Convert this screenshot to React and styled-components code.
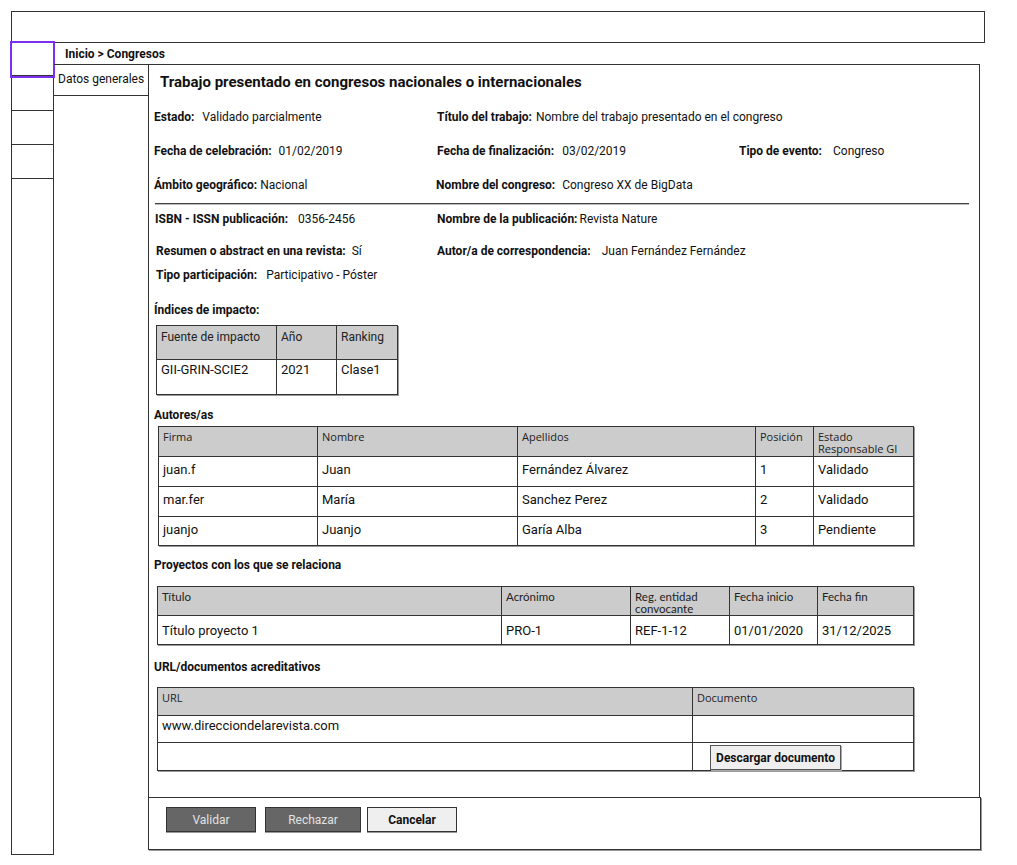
import React from 'react';
import styled, { createGlobalStyle } from 'styled-components';

const GlobalStyle = createGlobalStyle`
  * { box-sizing: border-box; }
  body {
    margin: 0;
    background: #fff;
    color: #111;
    font-family: Roboto, "Liberation Sans", Arial, sans-serif;
  }
`;

const Page = styled.div`
  width: 1017px;
  height: 865px;
  padding: 11px 0 0 11px;
`;

const TopBar = styled.div`
  width: 974px;
  height: 32px;
  border: 1px solid #333;
`;

const Body = styled.div`
  display: flex;
`;

const Rail = styled.div`
  width: 43px;
  height: 812px;
  display: flex;
  flex-direction: column;
  border: 1px solid #333;
  border-top: none;
`;

const NavBox = styled.div`
  height: ${(p) => p.$h}px;
  border-bottom: 1px solid #333;
  outline: ${(p) => (p.$active ? '2px solid #7a2ff2' : 'none')};
`;

const Workspace = styled.div`
  display: flex;
  flex-direction: column;
`;

const Breadcrumb = styled.div`
  height: 21px;
  padding: 3px 0 0 11px;
  font-size: 12px;
  font-weight: 700;
  line-height: 16px;
`;

const Split = styled.div`
  display: flex;
`;

const TabColumn = styled.div`
  width: 94px;
  border-top: 1px solid #333;
`;

const Tab = styled.div`
  height: 31px;
  padding-left: 4px;
  border-bottom: 1px solid #333;
  font-size: 12px;
  line-height: 29px;
`;

const MainColumn = styled.div`
  display: flex;
  flex-direction: column;
`;

const Panel = styled.div`
  width: 832px;
  height: 733px;
  padding-left: 5px;
  border: 1px solid #333;
  border-bottom: none;
`;

const Title = styled.h1`
  margin: 0;
  padding: 8px 0 0 6px;
  height: 35px;
  font-size: 15px;
  line-height: 18px;
  font-weight: 700;
`;

const FieldRow = styled.div`
  display: grid;
  grid-template-columns: 283px 302px 1fr;
  align-items: center;
  height: ${(p) => p.$h}px;
`;

const Field = styled.div`
  display: flex;
  align-items: center;
  margin-left: ${(p) => p.$shift || 0}px;
  font-size: 12px;
  line-height: 16px;
  white-space: nowrap;
`;

const Label = styled.span`
  font-weight: 700;
`;

const Value = styled.span`
  margin-left: ${(p) => p.$gap}px;
`;

const Divider = styled.hr`
  width: 814px;
  margin: 1px 0 0 1px;
  border: none;
  border-top: 1px solid #444;
  box-shadow: 0 1px 0 #bbb;
`;

const SectionLabel = styled.div`
  margin-top: ${(p) => p.$top}px;
  height: 16px;
  font-size: 12px;
  font-weight: 700;
  line-height: 16px;
`;

const Grid = styled.div`
  display: grid;
  grid-template-columns: ${(p) => p.$cols};
  grid-template-rows: ${(p) => p.$rows};
  margin: ${(p) => p.$top}px 0 0 ${(p) => p.$indent}px;
  width: max-content;
  border-top: 1px solid #333;
  border-left: 1px solid #333;
  box-shadow: 1px 1px 0 #999;
`;

const HeadCell = styled.div`
  padding: ${(p) => p.$pt ?? 5}px 4px 0 4px;
  background: #cccccc;
  border-right: 1px solid #333;
  border-bottom: 1px solid #333;
  font-family: ${(p) => p.$font || '"Open Sans", Roboto, sans-serif'};
  font-size: ${(p) => p.$size || 11}px;
  line-height: ${(p) => p.$lh || 12}px;
  white-space: pre-line;
  color: #222;
`;

const Cell = styled.div`
  padding: ${(p) => p.$pt}px 4px 0 4px;
  border-right: 1px solid #333;
  border-bottom: 1px solid #333;
  font-size: 13px;
  line-height: 16px;
  white-space: nowrap;
`;

const DownloadButton = styled.button`
  width: 131px;
  height: 25px;
  margin: 2px 0 0 13px;
  padding: 0;
  border: 1px solid #555;
  background: #efefef;
  box-shadow: 1px 1px 0 #aaa;
  font-family: Roboto, "Liberation Sans", sans-serif;
  font-size: 12px;
  font-weight: 700;
  color: #111;
`;

const Footer = styled.div`
  width: 833px;
  height: 53px;
  display: flex;
  align-items: flex-start;
  padding: 9px 0 0 17px;
  border: 1px solid #333;
  box-shadow: 1px 1px 0 #999;
`;

const ActionButton = styled.button`
  width: ${(p) => p.$w}px;
  height: 25px;
  margin-right: ${(p) => p.$mr || 0}px;
  padding: 0;
  border: 1px solid #333;
  background: ${(p) => (p.$primary ? '#666666' : '#efefef')};
  color: ${(p) => (p.$primary ? '#e2e2e2' : '#111')};
  font-family: Roboto, "Liberation Sans", sans-serif;
  font-size: 12px;
  font-weight: ${(p) => (p.$primary ? 400 : 700)};
  box-shadow: 0 1px 0 #999;
`;

function DataTable({ cols, rows, top, indent, heads, body, pt, headPt, headFont, headSize, headLh }) {
  return (
    <Grid $cols={cols} $rows={rows} $top={top} $indent={indent}>
      {heads.map((h) => (
        <HeadCell key={h} $pt={headPt} $font={headFont} $size={headSize} $lh={headLh}>
          {h}
        </HeadCell>
      ))}
      {body.map((row, r) =>
        row.map((c, i) => (
          <Cell key={`${r}-${i}`} $pt={pt}>
            {c}
          </Cell>
        ))
      )}
    </Grid>
  );
}

export default function App() {
  return (
    <Page>
      <GlobalStyle />
      <TopBar />
      <Body>
        <Rail>
          <NavBox $h={33} $active />
          <NavBox $h={35} />
          <NavBox $h={34} />
          <NavBox $h={34} />
        </Rail>
        <Workspace>
          <Breadcrumb>Inicio &gt; Congresos</Breadcrumb>
          <Split>
            <TabColumn>
              <Tab>Datos generales</Tab>
            </TabColumn>
            <MainColumn>
              <Panel>
                <Title>Trabajo presentado en congresos nacionales o internacionales</Title>

                <FieldRow $h={34}>
                  <Field>
                    <Label>Estado:</Label>
                    <Value $gap={8}>Validado parcialmente</Value>
                  </Field>
                  <Field>
                    <Label>Título del trabajo:</Label>
                    <Value $gap={4}>Nombre del trabajo presentado en el congreso</Value>
                  </Field>
                </FieldRow>
                <FieldRow $h={34}>
                  <Field>
                    <Label>Fecha de celebración:</Label>
                    <Value $gap={7}>01/02/2019</Value>
                  </Field>
                  <Field>
                    <Label>Fecha de finalización:</Label>
                    <Value $gap={8}>03/02/2019</Value>
                  </Field>
                  <Field>
                    <Label>Tipo de evento:</Label>
                    <Value $gap={11}>Congreso</Value>
                  </Field>
                </FieldRow>
                <FieldRow $h={34}>
                  <Field>
                    <Label>Ámbito geográfico:</Label>
                    <Value $gap={3}>Nacional</Value>
                  </Field>
                  <Field $shift={-1}>
                    <Label>Nombre del congreso:</Label>
                    <Value $gap={7}>Congreso XX de BigData</Value>
                  </Field>
                </FieldRow>

                <Divider />

                <FieldRow $h={30}>
                  <Field $shift={1}>
                    <Label>ISBN - ISSN publicación:</Label>
                    <Value $gap={10}>0356-2456</Value>
                  </Field>
                  <Field>
                    <Label>Nombre de la publicación:</Label>
                    <Value $gap={2}>Revista Nature</Value>
                  </Field>
                </FieldRow>
                <FieldRow $h={33}>
                  <Field $shift={2}>
                    <Label>Resumen o abstract en una revista:</Label>
                    <Value $gap={6}>Sí</Value>
                  </Field>
                  <Field>
                    <Label>Autor/a de correspondencia:</Label>
                    <Value $gap={11}>Juan Fernández Fernández</Value>
                  </Field>
                </FieldRow>
                <FieldRow $h={16}>
                  <Field $shift={2}>
                    <Label>Tipo participación:</Label>
                    <Value $gap={9}>Participativo - Póster</Value>
                  </Field>
                </FieldRow>

                <SectionLabel $top={19}>Índices de impacto:</SectionLabel>
                <DataTable
                  cols="120px 60px 61px"
                  rows="34px 35px"
                  top={7}
                  indent={2}
                  pt={2}
                  headFont='Roboto, "Liberation Sans", sans-serif'
                  headSize={12}
                  heads={['Fuente de impacto', 'Año', 'Ranking']}
                  body={[['GII-GRIN-SCIE2', '2021', 'Clase1']]}
                />

                <SectionLabel $top={12}>Autores/as</SectionLabel>
                <DataTable
                  cols="159px 200px 238px 58px 100px"
                  rows="30px 30px 30px 29px"
                  top={3}
                  indent={4}
                  pt={5}
                  headPt={4}
                  headLh={12}
                  heads={['Firma', 'Nombre', 'Apellidos', 'Posición', 'Estado\nResponsable GI']}
                  body={[
                    ['juan.f', 'Juan', 'Fernández Álvarez', '1', 'Validado'],
                    ['mar.fer', 'María', 'Sanchez Perez', '2', 'Validado'],
                    ['juanjo', 'Juanjo', 'Garía Alba', '3', 'Pendiente'],
                  ]}
                />

                <SectionLabel $top={11}>Proyectos con los que se relaciona</SectionLabel>
                <DataTable
                  cols="344px 129px 99px 88px 96px"
                  rows="29px 29px"
                  top={13}
                  indent={3}
                  pt={7}
                  headPt={4}
                  headFont='Lato, "Open Sans", sans-serif'
                  headSize={11.5}
                  heads={['Título', 'Acrónimo', 'Reg. entidad\nconvocante', 'Fecha inicio', 'Fecha fin']}
                  body={[['Título proyecto 1', 'PRO-1', 'REF-1-12', '01/01/2020', '31/12/2025']]}
                />

                <SectionLabel $top={14}>URL/documentos acreditativos</SectionLabel>
                <Grid $cols="535px 221px" $rows="28px 27px 28px" $top={12} $indent={3}>
                  <HeadCell $pt={4}>URL</HeadCell>
                  <HeadCell $pt={4}>Documento</HeadCell>
                  <Cell $pt={2}>www.direcciondelarevista.com</Cell>
                  <Cell $pt={2} />
                  <Cell $pt={2} />
                  <Cell $pt={0}>
                    <DownloadButton>Descargar documento</DownloadButton>
                  </Cell>
                </Grid>
              </Panel>
              <Footer>
                <ActionButton $primary $w={90} $mr={9}>Validar</ActionButton>
                <ActionButton $primary $w={96} $mr={6}>Rechazar</ActionButton>
                <ActionButton $w={90}>Cancelar</ActionButton>
              </Footer>
            </MainColumn>
          </Split>
        </Workspace>
      </Body>
    </Page>
  );
}
